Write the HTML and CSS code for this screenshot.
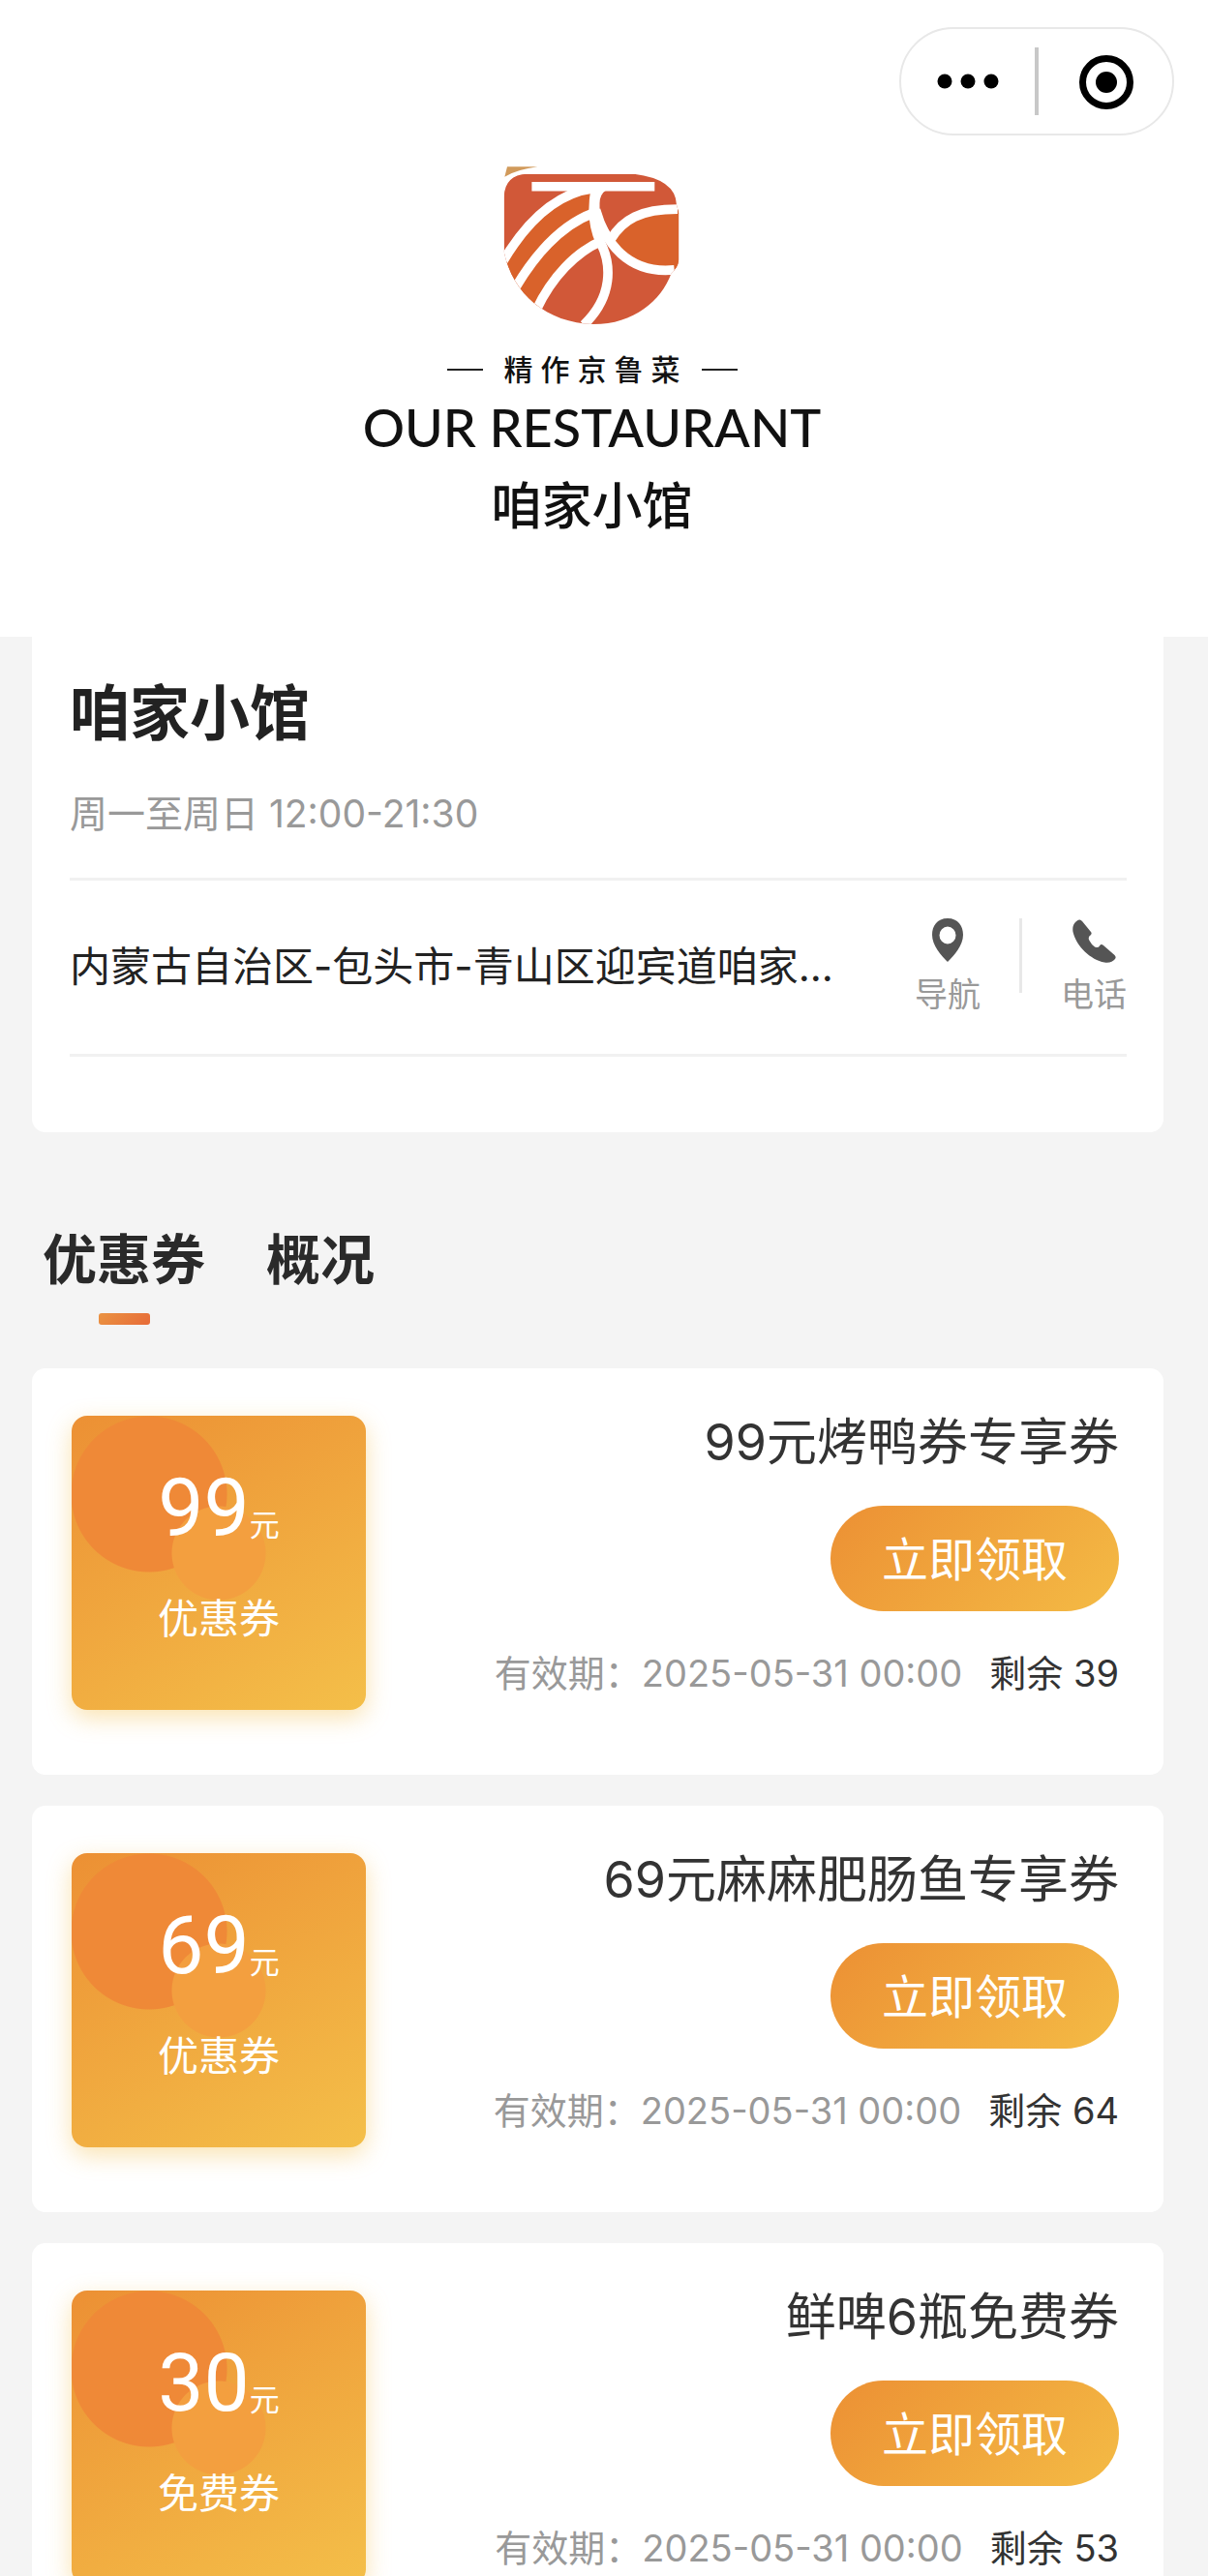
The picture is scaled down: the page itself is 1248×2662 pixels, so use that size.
FILE: index.html
```html
<!DOCTYPE html>
<html lang="zh-CN">
<head>
    <meta charset="UTF-8">
    <meta name="viewport" content="width=device-width, initial-scale=1.0">
    <title>咱家小馆</title>
    <link rel="stylesheet" href="styles.css">
</head>
<body>
    <header class="hero">
        <div class="capsule">
            <button type="button" class="capsule-btn" aria-label="更多">
                <svg width="64" height="16" viewBox="0 0 64 16">
                    <circle cx="8" cy="8" r="7.5"/>
                    <circle cx="32" cy="8" r="7.5"/>
                    <circle cx="56" cy="8" r="7.5"/>
                </svg>
            </button>
            <span class="capsule-line"></span>
            <button type="button" class="capsule-btn" aria-label="关闭">
                <svg width="58" height="58" viewBox="0 0 58 58">
                    <circle cx="30" cy="30" r="24.5" fill="none" stroke="#000" stroke-width="7"/>
                    <circle cx="30" cy="30" r="11"/>
                </svg>
            </button>
        </div>
        <div class="brand">
            <svg class="brand-mark" viewBox="60 30 560 500">
                <defs>
                    <clipPath id="shield">
                        <path d="M68 130 Q70 62 140 59 L470 59 Q600 75 602 155 L609 180 V325 Q606 350 585 368 C555 450 470 524 345 524 C200 520 95 430 68 300 Z"/>
                    </clipPath>
                </defs>
                <path d="M78 37 H172 Q110 45 70 68 Z" fill="#d19a5b"/>
                <g clip-path="url(#shield)">
                    <rect x="60" y="50" width="560" height="480" fill="#d15838"/>
                    <path d="M70 335 C140 220 220 120 345 112 L345 275 C280 310 220 380 175 475 L100 440 Z" fill="#d9622b"/>
                    <path d="M400 262 C430 200 510 165 612 170 V350 C520 370 450 345 400 262 Z" fill="#d9622b"/>
                    <g fill="none" stroke="#fff" stroke-width="29">
                        <path d="M154 98 H534"/>
                        <path d="M66 328 C145 195 235 118 345 104"/>
                        <path d="M104 410 C170 300 250 215 345 180"/>
                        <path d="M168 480 C215 380 290 300 372 266"/>
                        <path d="M605 168 C490 168 435 200 398 262"/>
                        <path d="M352 170 C380 270 450 370 595 356"/>
                        <path d="M352 105 C340 165 345 225 366 270 C402 340 405 440 315 526"/>
                    </g>
                    <path d="M336 108 H386 Q364 122 364 150 V190 L400 245 L376 262 L345 240 L332 180 Z" fill="#fff"/>
                </g>
            </svg>
            <p class="brand-tagline">精 作 京 鲁 菜</p>
            <p class="brand-en">OUR RESTAURANT</p>
            <p class="brand-cn">咱家小馆</p>
        </div>
    </header>

    <main class="content">
        <section class="shop">
            <h1 class="shop-name">咱家小馆</h1>
            <p class="shop-hours">周一至周日 12:00-21:30</p>
            <div class="shop-row">
                <p class="shop-address">内蒙古自治区-包头市-青山区迎宾道咱家...</p>
                <div class="shop-actions">
                    <button type="button" class="action">
                        <svg width="38" height="46" viewBox="0 0 38 46">
                            <path fill="#555" fill-rule="evenodd" d="M19 0C8 0 3 8 3 17c0 11 9 21 16 28 7-7 16-17 16-28C35 8 30 0 19 0Zm0 8.500a8.500 9 0 1 1 0 18 8.500 9 0 0 1 0-18Z"/>
                        </svg>
                        导航
                    </button>
                    <span class="action-line"></span>
                    <button type="button" class="action">
                        <svg width="46" height="46" viewBox="0 0 46 46">
                            <path fill="#555" d="M8 1.500Q9.500 1 11 3l9 11q1.500 2-.5 3.500-3 2-1 5.500 2 4 5.500 6.500 3.500 1.500 5-1 1.500-2.500 4-.5l11.500 10q2 2 .5 4-3.500 4.500-11 3.500C20 43 5 29 1.500 14 .5 8 3 3 8 1.500Z"/>
                        </svg>
                        电话
                    </button>
                </div>
            </div>
        </section>

        <nav class="tabs">
            <button type="button" class="tab active">优惠券</button>
            <button type="button" class="tab">概况</button>
        </nav>

        <section class="coupons">
            <article class="coupon">
                <div class="ticket">
                    <p class="ticket-value">99<small>元</small></p>
                    <p class="ticket-type">优惠券</p>
                </div>
                <div class="coupon-info">
                    <h2 class="coupon-title">99元烤鸭券专享券</h2>
                    <button type="button" class="claim">立即领取</button>
                    <p class="coupon-meta"><span>有效期：2025-05-31 00:00</span><span class="left">剩余 39</span></p>
                </div>
            </article>

            <article class="coupon">
                <div class="ticket">
                    <p class="ticket-value">69<small>元</small></p>
                    <p class="ticket-type">优惠券</p>
                </div>
                <div class="coupon-info">
                    <h2 class="coupon-title">69元麻麻肥肠鱼专享券</h2>
                    <button type="button" class="claim">立即领取</button>
                    <p class="coupon-meta"><span>有效期：2025-05-31 00:00</span><span class="left">剩余 64</span></p>
                </div>
            </article>

            <article class="coupon">
                <div class="ticket">
                    <p class="ticket-value">30<small>元</small></p>
                    <p class="ticket-type">免费券</p>
                </div>
                <div class="coupon-info">
                    <h2 class="coupon-title">鲜啤6瓶免费券</h2>
                    <button type="button" class="claim">立即领取</button>
                    <p class="coupon-meta"><span>有效期：2025-05-31 00:00</span><span class="left">剩余 53</span></p>
                </div>
            </article>
        </section>
    </main>
</body>
</html>
```
FILE: styles.css
```css
* {
    box-sizing: border-box;
}

body {
    margin: 0;
    background-color: #f4f4f4;
    color: #222;
    font-family: Inter, "Noto Sans CJK SC", sans-serif;
}

h1, h2, p {
    margin: 0;
}

button {
    padding: 0;
    border: none;
    background: none;
    color: inherit;
    font-family: inherit;
    cursor: pointer;
}

svg {
    display: block;
}

/* header */
.hero {
    padding: 28px 35px 96px 10px;
    background-color: #fff;
}

.capsule {
    display: flex;
    align-items: center;
    width: 284px;
    height: 112px;
    margin-left: auto;
    border: 2px solid #e8e8e8;
    border-radius: 56px;
}

.capsule-btn {
    display: flex;
    flex: 1;
    justify-content: center;
}

.capsule-line {
    width: 4px;
    height: 70px;
    background-color: #c8c8c8;
}

.brand {
    display: flex;
    flex-direction: column;
    align-items: center;
    margin-top: 30px;
    color: #111;
}

.brand-mark {
    width: 187px;
    height: 167px;
}

.brand-tagline {
    display: flex;
    align-items: center;
    gap: 22px;
    margin-top: 25px;
    font-size: 30px;
    font-weight: 500;
    line-height: 40px;
}

.brand-tagline::before,
.brand-tagline::after {
    content: "";
    width: 37px;
    height: 2px;
    background-color: #222;
}

.brand-en {
    margin-top: 8px;
    font-family: Lato, sans-serif;
    font-size: 54px;
    font-weight: 500;
    line-height: 64px;
}

.brand-cn {
    margin-top: 12px;
    font-size: 52px;
    font-weight: 500;
    line-height: 76px;
}

/* shop card */
.content {
    padding: 0 46px 32px 33px;
}

.shop {
    padding: 43px 38px 78px 39px;
    border-radius: 0 0 14px 14px;
    background-color: #fff;
}

.shop-name {
    font-size: 62px;
    line-height: 74px;
}

.shop-hours {
    margin-top: 42px;
    color: #999;
    font-size: 39px;
    line-height: 48px;
}

.shop-row {
    display: flex;
    align-items: center;
    justify-content: space-between;
    margin-top: 42px;
    padding: 39px 0 41px;
    border-top: 3px solid #f1f1f1;
    border-bottom: 3px solid #f1f1f1;
}

.shop-address {
    overflow: hidden;
    font-size: 42px;
    line-height: 56px;
    white-space: nowrap;
}

.shop-actions {
    display: flex;
    flex-shrink: 0;
    gap: 40px;
}

.action {
    display: flex;
    flex-direction: column;
    align-items: center;
    gap: 13px;
    color: #999;
    font-size: 34px;
    line-height: 40px;
}

.action-line {
    width: 3px;
    height: 77px;
    background-color: #e8e8e8;
}

/* tabs */
.tabs {
    display: flex;
    align-items: flex-start;
    gap: 63px;
    padding: 99px 11px 45px;
}

.tab {
    color: #2a2a2a;
    font-size: 56px;
    font-weight: bold;
    line-height: 66px;
}

.tab.active::after {
    content: "";
    display: block;
    width: 53px;
    height: 12px;
    margin: 22px auto 0;
    border-radius: 3px;
    background: linear-gradient(135deg, #ea9342, #e76b38);
}

/* coupons */
.coupons {
    display: flex;
    flex-direction: column;
    gap: 32px;
}

.coupon {
    display: flex;
    justify-content: space-between;
    height: 420px;
    padding: 49px 46px 0 41px;
    border-radius: 14px;
    background-color: #fff;
}

.ticket {
    width: 304px;
    height: 304px;
    padding-top: 48px;
    border-radius: 16px;
    background:
        radial-gradient(circle at 152px 142px, #f39f3f 48px, transparent 49px),
        radial-gradient(circle at 80px 81px, #ef8937 80px, transparent 81px),
        linear-gradient(150deg, #ec9034, #f4bf49);
    box-shadow: 0 8px 24px rgba(243, 185, 60, 0.4);
    color: #fff;
    text-align: center;
}

.ticket-value {
    font-family: Roboto, "Noto Sans CJK SC", sans-serif;
    font-size: 84px;
    line-height: 96px;
}

.ticket-value small {
    font-size: 31px;
}

.ticket-type {
    margin-top: 20px;
    font-size: 42px;
    line-height: 56px;
}

.coupon-info {
    display: flex;
    flex-direction: column;
    align-items: flex-end;
}

.coupon-title {
    color: #333;
    font-size: 52px;
    font-weight: normal;
    line-height: 56px;
}

.claim {
    width: 298px;
    height: 109px;
    margin-top: 37px;
    padding-bottom: 5px;
    border-radius: 55px;
    background: linear-gradient(135deg, #ec9034, #f4bb45);
    color: #fff;
    font-size: 48px;
}

.coupon-meta {
    display: flex;
    gap: 28px;
    margin-top: 40px;
    color: #999;
    font-size: 38px;
    line-height: 48px;
}

.coupon-meta .left {
    color: #333;
}
```
